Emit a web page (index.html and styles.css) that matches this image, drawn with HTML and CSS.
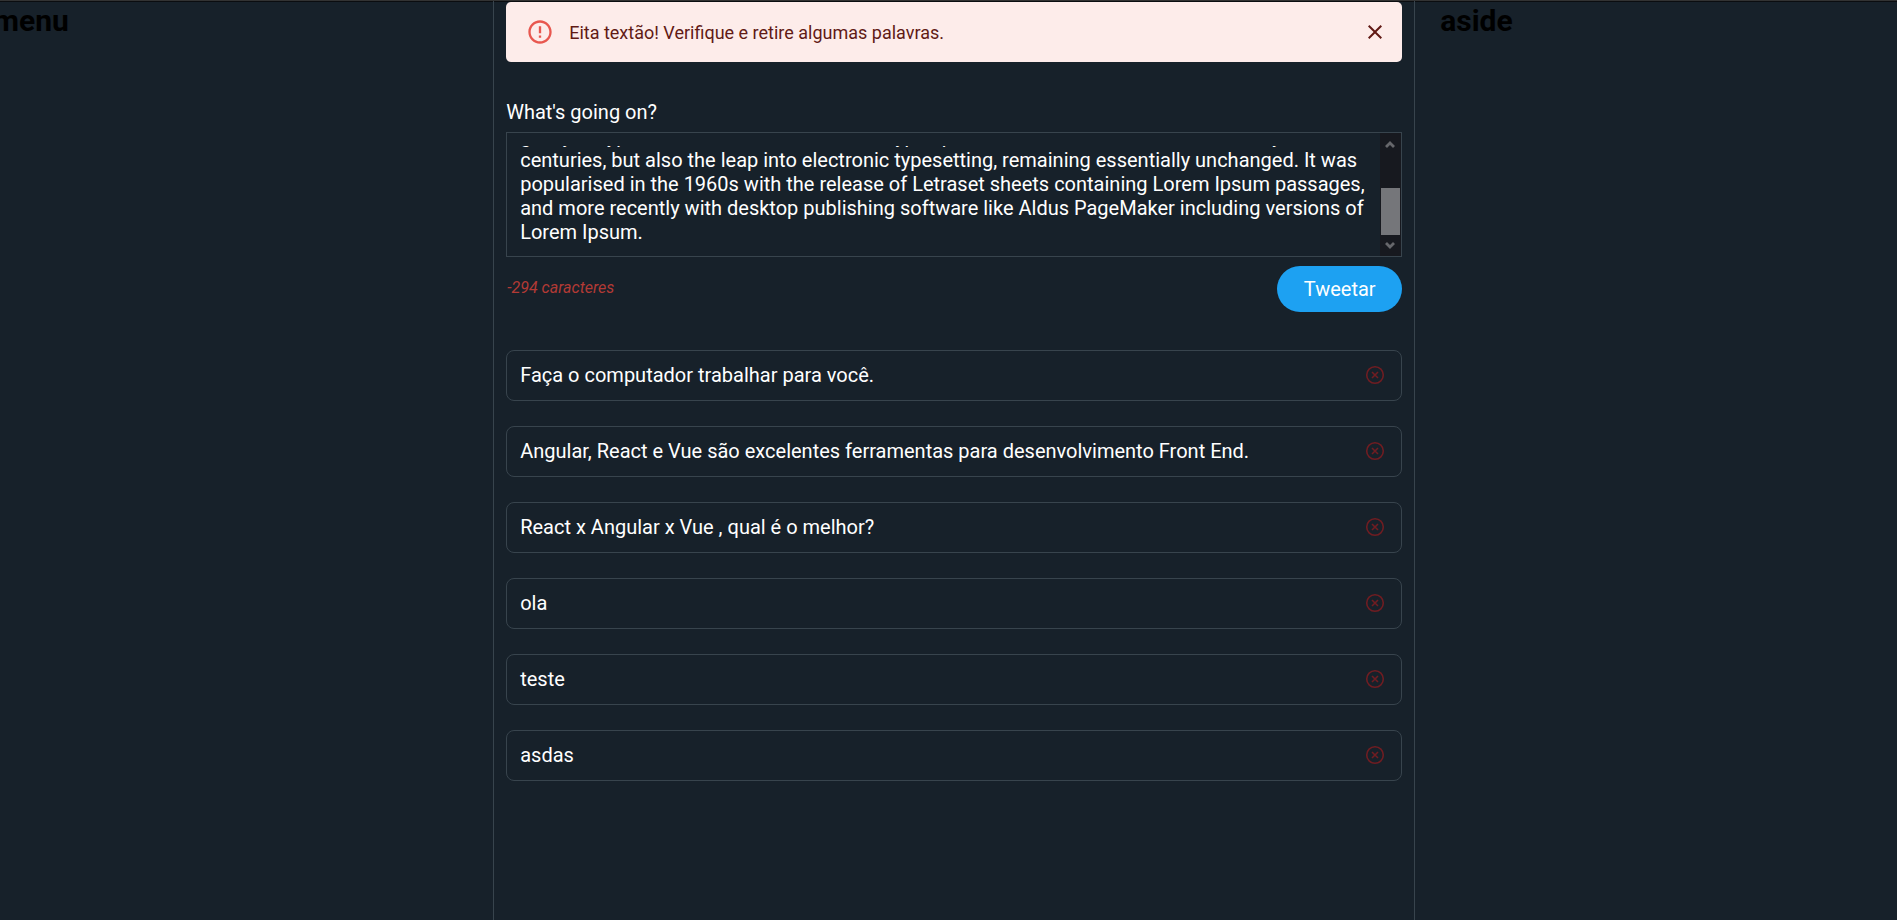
FILE: index.html
```html
<!DOCTYPE html>
<html lang="pt-BR">
<head>
<meta charset="utf-8">
<meta name="viewport" content="width=device-width, initial-scale=1">
<title>Tweets</title>
<link rel="stylesheet" href="styles.css">
</head>
<body>
<svg class="sprite" aria-hidden="true">
  <symbol id="icon-remove" viewBox="0 0 20 20">
    <circle cx="10" cy="10" r="8.3" fill="none" stroke="currentColor" stroke-width="1.6"/>
    <path d="M7 7l6 6M13 7l-6 6" fill="none" stroke="currentColor" stroke-width="1.6"/>
  </symbol>
</svg>
<div class="layout">
  <nav class="menu"><h1 class="side-title">menu</h1></nav>
  <main class="feed">
    <div class="alert" role="alert">
      <svg class="alert-icon" viewBox="0 0 24 24" aria-hidden="true"><path fill="currentColor" d="M11 15h2v2h-2zm0-8h2v6h-2zm.99-5C6.47 2 2 6.48 2 12s4.47 10 9.99 10C17.52 22 22 17.52 22 12S17.52 2 11.99 2zM12 20c-4.42 0-8-3.58-8-8s3.58-8 8-8 8 3.58 8 8-3.58 8-8 8z"/></svg>
      <p class="alert-text">Eita textão! Verifique e retire algumas palavras.</p>
      <button class="alert-close" type="button" aria-label="Fechar"><svg viewBox="0 0 24 24" aria-hidden="true"><path fill="currentColor" d="M19 6.41L17.59 5 12 10.59 6.41 5 5 6.41 10.59 12 5 17.59 6.41 19 12 13.41 17.59 19 19 17.59 13.41 12z"/></svg></button>
    </div>
    <form class="composer">
      <label class="composer-label" for="tweet">What's going on?</label>
      <div class="composer-box">
        <textarea class="composer-input" id="tweet" spellcheck="false">Lorem Ipsum is simply dummy text of the printing and typesetting industry. Lorem Ipsum has been the industry's standard dummy text ever since the 1500s, when an unknown printer took a galley of type and scrambled it to make a type specimen book. It has survived not only five centuries, but also the leap into electronic typesetting, remaining essentially unchanged. It was popularised in the 1960s with the release of Letraset sheets containing Lorem Ipsum passages, and more recently with desktop publishing software like Aldus PageMaker including versions of Lorem Ipsum.</textarea>
        <div class="scrollbar" aria-hidden="true">
          <svg class="scroll-arrow" viewBox="0 0 20 20"><path d="M6 13.5l4-4 4 4" fill="none" stroke="currentColor" stroke-width="2.8"/></svg>
          <span class="scroll-thumb"></span>
          <svg class="scroll-arrow" viewBox="0 0 20 20"><path d="M6 7.5l4 4 4-4" fill="none" stroke="currentColor" stroke-width="2.8"/></svg>
        </div>
      </div>
      <div class="composer-footer">
        <span class="counter">-294 caracteres</span>
        <button class="submit" type="submit">Tweetar</button>
      </div>
    </form>
    <ul class="tweets">
      <li class="tweet"><span>Faça o computador trabalhar para você.</span><button class="remove" type="button" aria-label="Remover"><svg><use href="#icon-remove"/></svg></button></li>
      <li class="tweet"><span>Angular, React e Vue são excelentes ferramentas para desenvolvimento Front End.</span><button class="remove" type="button" aria-label="Remover"><svg><use href="#icon-remove"/></svg></button></li>
      <li class="tweet"><span>React x Angular x Vue , qual é o melhor?</span><button class="remove" type="button" aria-label="Remover"><svg><use href="#icon-remove"/></svg></button></li>
      <li class="tweet"><span>ola</span><button class="remove" type="button" aria-label="Remover"><svg><use href="#icon-remove"/></svg></button></li>
      <li class="tweet"><span>teste</span><button class="remove" type="button" aria-label="Remover"><svg><use href="#icon-remove"/></svg></button></li>
      <li class="tweet"><span>asdas</span><button class="remove" type="button" aria-label="Remover"><svg><use href="#icon-remove"/></svg></button></li>
    </ul>
  </main>
  <aside class="aside"><h1 class="side-title">aside</h1></aside>
</div>
<script src="script.js"></script>
</body>
</html>
```
FILE: styles.css
```css
* {
  box-sizing: border-box;
}

body {
  margin: 0;
  background: #17212a;
  color: #fff;
  font: 20px/24px Roboto, "Liberation Sans", sans-serif;
}

button {
  padding: 0;
  border: 0;
  background: none;
  color: inherit;
  font: inherit;
  cursor: pointer;
}

.sprite {
  display: none;
}

.layout {
  display: grid;
  grid-template-columns: 26fr 922px 25.4fr;
  min-height: 100vh;
  border-top: 1px solid #333;
  box-shadow: inset 0 1px #0b0d10;
}

.menu {
  overflow: hidden;
}

.side-title {
  margin: 0;
  padding-top: 2px;
  color: #000;
  font-size: 30px;
  line-height: 36px;
}

.menu .side-title {
  margin-left: -7px;
}

.aside {
  padding-left: 25px;
}

.feed {
  padding: 1px 12px 24px;
  border: solid #38444d;
  border-width: 0 1px;
}

.alert {
  display: flex;
  align-items: center;
  height: 60px;
  padding: 0 15px 0 20px;
  border-radius: 5px;
  background: #fdecea;
  color: #611a15;
  font-size: 18px;
}

.alert-icon {
  width: 28px;
  height: 28px;
  margin-right: 15px;
  color: #e8574f;
}

.alert-text {
  flex: 1;
  margin: 0;
  padding-top: 2px;
}

.alert-close,
.alert-close svg {
  display: block;
  width: 24px;
  height: 24px;
}

.composer {
  padding-top: 38px;
}

.composer-label {
  display: block;
  margin-bottom: 8px;
}

.composer-box {
  display: flex;
  border: 1px solid #38444d;
}

.composer-input {
  flex: 1;
  height: 98px;
  margin: 13px 12px 12px 13px;
  padding: 0;
  border: 0;
  outline: 0;
  background: transparent;
  color: inherit;
  font: inherit;
  resize: none;
  overflow-y: auto;
  scrollbar-width: none;
}

.scrollbar {
  display: flex;
  flex-direction: column;
  width: 21px;
  background: #17191f;
  color: #66676b;
}

.scroll-arrow {
  width: 20px;
  height: 21px;
}

.scroll-thumb {
  width: 19px;
  height: 47px;
  margin: auto 1px 0;
  background: #75767a;
}

.composer-footer {
  display: flex;
  justify-content: space-between;
  padding-top: 9px;
}

.counter {
  padding: 10px 0 0 1px;
  color: #b23a35;
  font-size: 16px;
  font-style: italic;
}

.submit {
  width: 125px;
  height: 46px;
  border-radius: 23px;
  background: #1da1f2;
}

.tweets {
  display: grid;
  gap: 25px;
  margin: 38px 0 0;
  padding: 0;
  list-style: none;
}

.tweet {
  display: flex;
  align-items: center;
  justify-content: space-between;
  min-height: 51px;
  padding: 0 16px 2px 13px;
  border: 1px solid #38444d;
  border-radius: 8px;
}

.remove,
.remove svg {
  display: block;
  width: 20px;
  height: 20px;
}

.remove {
  color: #6f1d22;
}
```
FILE: script.js
```js
const input = document.getElementById("tweet");
input.scrollTop = input.scrollHeight;
```
